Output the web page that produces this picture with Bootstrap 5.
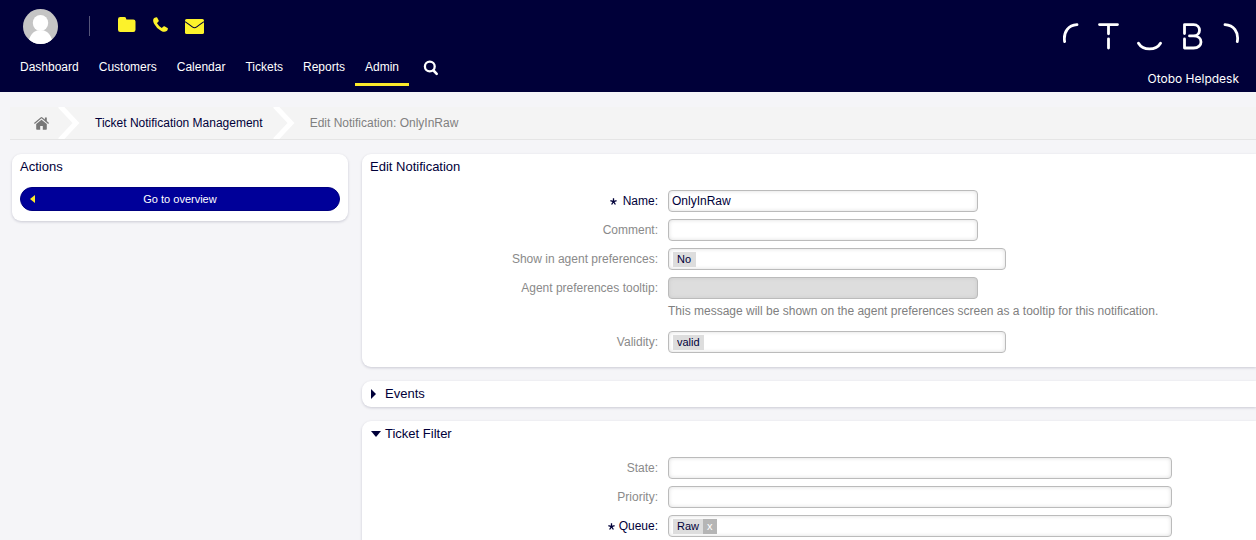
<!DOCTYPE html>
<html lang="en">
<head>
<meta charset="utf-8">
<meta name="viewport" content="width=device-width, initial-scale=1">
<title>Edit Notification: OnlyInRaw</title>
<link href="https://cdn.jsdelivr.net/npm/bootstrap@5.3.0/dist/css/bootstrap.min.css" rel="stylesheet">
<style>
  body { font: 12px/16px "Liberation Sans", Arial, sans-serif; color: #000039; background: #f5f5f8; overflow-x: hidden; }
  a { color: inherit; text-decoration: none; }
  .topbar { background: #000039; color: #fff; height: 92px; }
  .toolbar { padding: 8px 0 0 23px; height: 44px; }
  .toolbar-sep { width: 1px; height: 20px; background: #55557a; margin: 0 28px 0 31px; }
  .toolbar a { line-height: 0; }
  .toolbar-icons { gap: 17px; padding-bottom: 3px; }
  .mainnav { padding: 10px 0 0 10px; }
  .mainnav .nav-link { color: #fff; padding: 5px 10px 8px; height: 32px; border-bottom: 3px solid transparent; }
  .mainnav .nav-link.active { border-color: #fcea2b; }
  .mainnav .search-link { padding: 6px 14px 0; line-height: 0; }
  .brand { padding: 21px 17px 0 0; }
  .brand svg { margin-right: -1px; }
  .brand-name { font: 12px/16px Inter, "Noto Sans", sans-serif; padding-top: 18px; }
  .crumbs { margin: 15px 0 14px 10px; height: 33px; background: #f4f4f4; border-bottom: 1px solid #e5e5e5; color: #808080; }
  .crumbs .home { padding: 0 9px 0 24px; line-height: 0; }
  .crumb-text { padding: 0 10px 0 15px; }
  .crumb-link { color: #000039; }
  .layout { gap: 14px; padding-left: 12px; }
  .side { width: 336px; flex: none; padding-bottom: 10px; }
  .stack { gap: 14px; }
  .panel { background: #fff; border-radius: 9px; box-shadow: 0 1px 3px rgba(0, 0, 50, .18); padding: 5px 8px; }
  .panel.side { padding-bottom: 10px; }
  .panel.with-form { padding-bottom: 14px; }
  .panel-open-right { border-top-right-radius: 0; border-bottom-right-radius: 0; }
  .panel h2 { font-size: 13px; line-height: 16px; margin: 0; }
  .btn-overview { background: #000099; color: #fff; font-size: 11px; line-height: 14px; padding: 4px 9px; border: 1px solid #000080; border-radius: 12px; margin-top: 12px; }
  .btn-overview:hover { background: #0000b0; color: #fff; }
  .btn-overview span { padding-right: 5px; }
  .form-grid { display: grid; grid-template-columns: 288px minmax(0, 1fr); column-gap: 10px; row-gap: 7px; align-items: start; margin-top: 15px; }
  .form-grid label { color: #8a8a8a; text-align: right; line-height: 22px; height: 22px; }
  .form-grid label.needed { color: #000039; }
  .field { height: 22px; min-height: 0; border: 1px solid #bbb; border-radius: 4px; box-shadow: inset 0 0 4px #ddd; background: #fff; color: #000039; font-size: 12px; line-height: 16px; padding: 2px 3px; max-width: 100%; }
  .field:disabled { background: #ddd; box-shadow: inset 0 0 4px #ccc; }
  .w-field { width: 310px; }
  .w-pick { width: 338px; }
  .w-wide { width: 504px; }
  .chip-box { padding: 3px 4px 2px; }
  .chip { appearance: none; border: 0; border-radius: 0; background: #ddd; color: #000039; font-size: 11px; line-height: 15px; height: 15px; padding: 0 4px; }
  .chip-x { background: #b5b5b5; color: #fff; }
  .chip-entry { border: 0; outline: 0; background: transparent; height: 15px; min-width: 0; }
  .hint { color: #808080; margin: 4px 0 5px; }
</style>
</head>
<body>
<svg class="d-none"><symbol id="star" viewBox="0 0 7 7"><path d="M3.500 3.700V.3M3.500 3.700L.4 2.700M3.500 3.700L6.600 2.700M3.500 3.700L1.600 6.500M3.500 3.700L5.400 6.500" stroke="#000039" stroke-width="1.300"/></symbol></svg>
<header class="topbar d-flex justify-content-between">
  <div>
    <div class="toolbar d-flex align-items-center">
      <a href="#" aria-label="Profile"><svg width="35" height="35" viewBox="0 0 35 35"><defs><clipPath id="face"><circle cx="17.500" cy="17.500" r="17.500"/></clipPath></defs><g clip-path="url(#face)"><rect width="35" height="35" fill="#c5c5c5"/><ellipse cx="17.500" cy="14" rx="7.700" ry="8" fill="#fff"/><path d="M5 36c1-9 4.500-13 9-14.500h7c4.500 1.500 8 5.500 9 14.500z" fill="#fff"/></g></svg></a>
      <span class="toolbar-sep"></span>
      <div class="toolbar-icons d-flex align-items-center">
        <a href="#" aria-label="Tickets"><svg width="18" height="15" viewBox="0 0 18 15" fill="#fcf22b"><path d="M2.200 0h4.300q1.600 0 1.900 2.400h6.900q2.200 0 2.200 2.100v8.300q0 2.200-2.200 2.200H2.200Q0 15 0 12.800V2.200Q0 0 2.200 0z"/></svg></a>
        <a href="#" aria-label="Phone ticket"><svg width="15" height="15" viewBox="0 0 15 15" fill="#fcf22b"><path d="M3.400.200Q4 0 4.300.700L5.700 3.400Q6 4 5.500 4.500L4.300 5.700Q3.900 6.100 4.200 6.600 5.800 9.300 8.400 10.800 8.900 11.100 9.300 10.600L10.400 9.500Q10.900 9 11.500 9.300L14.500 10.900Q15 11.200 14.900 11.700 14.600 13.500 13.700 14.100 11.400 15.600 8.300 13.900 3.500 11.500 1.100 6.700-.600 3.500.700 1.400 1.300.400 3.400.200z"/></svg></a>
        <a href="#" aria-label="Email ticket" class="pt-1"><svg width="19" height="15" viewBox="0 0 19 15"><rect width="19" height="15" rx="1.600" fill="#fcf22b"/><path d="M0 2.700q5 3.400 7.300 5.200 2.200 1.700 4.400 0Q14 6.100 19 2.700" fill="none" stroke="#000039" stroke-width="1.100"/></svg></a>
      </div>
    </div>
    <nav class="mainnav nav flex-nowrap">
      <a class="nav-link" href="#">Dashboard</a>
      <a class="nav-link" href="#">Customers</a>
      <a class="nav-link" href="#">Calendar</a>
      <a class="nav-link" href="#">Tickets</a>
      <a class="nav-link" href="#">Reports</a>
      <a class="nav-link active" href="#" aria-current="page">Admin</a>
      <a class="search-link" href="#" aria-label="Search"><svg width="16" height="16" viewBox="0 0 16 16" fill="none" stroke="#fff"><circle cx="6.800" cy="6.500" r="4.900" stroke-width="2.300"/><path d="M10.500 10.500l3.200 3.300" stroke-width="2.600" stroke-linecap="round"/></svg></a>
    </nav>
  </div>
  <div class="brand text-end">
    <svg class="d-block ms-auto" width="180" height="32" viewBox="0 0 180 32" fill="none" stroke="#fff" stroke-width="2.800" stroke-linecap="round" stroke-linejoin="round" role="img" aria-label="OTOBO"><path d="M17 3.600C8.500 4 3.200 11 4.600 20.500M39.500 3.600H57.500M48.500 4V12.800M48.500 17.800V27M78.500 22.200C83 29.800 96 29.800 100.500 22.200M124.500 12.500V3.600H133.500C141.500 3.600 141.500 14.900 133.500 14.900H129.500M133.500 14.900C143.500 14.900 143.500 27 133.500 27H124.500V18M165 3.600C173.500 4 179 11 177.300 20.500"/></svg>
    <div class="brand-name">Otobo Helpdesk</div>
  </div>
</header>

<nav class="crumbs d-flex align-items-center" aria-label="Breadcrumb">
  <a class="home" href="#" aria-label="Home"><svg width="15" height="13" viewBox="0 0 15 13" fill="#777"><path d="M7.500 2.700L2.200 7.100V12q0 .7.700.7H6.200V9H8.800V12.700H12.100q.7 0 .7-.7V7.100z"/><path d="M7.500 0Q7 0 6.600.4L0 6 .8 6.900 7.500 1.300 14.200 6.900 15 6 12.800 4.100V.500H10.900V2.500L8.400.400Q8 0 7.500 0z"/></svg></a>
  <svg width="22" height="32" viewBox="0 0 22 32" fill="none" stroke="#fff" stroke-width="5"><path d="M2-1L18 16 2 33"/></svg>
  <a class="crumb-text crumb-link" href="#">Ticket Notification Management</a>
  <svg width="22" height="32" viewBox="0 0 22 32" fill="none" stroke="#fff" stroke-width="5"><path d="M2-1L18 16 2 33"/></svg>
  <span class="crumb-text">Edit Notification: OnlyInRaw</span>
</nav>

<div class="layout d-flex align-items-start">
  <aside class="side panel">
    <h2>Actions</h2>
    <button type="button" class="btn btn-overview w-100 d-flex align-items-center">
      <svg width="5" height="8" viewBox="0 0 5 8"><path d="M5 0v8L0 4z" fill="#fcea2b"/></svg>
      <span class="flex-grow-1">Go to overview</span>
    </button>
  </aside>

  <main class="stack flex-grow-1 d-flex flex-column">
    <section class="panel panel-open-right with-form">
      <h2>Edit Notification</h2>
      <form class="form-grid">
        <label class="needed" for="name"><svg width="7" height="7" aria-hidden="true"><use href="#star"/></svg>&ensp;Name:</label>
        <div><input id="name" class="field w-field d-block" type="text" value="OnlyInRaw"></div>
        <label for="comment">Comment:</label>
        <div><input id="comment" class="field w-field d-block" type="text"></div>
        <label for="show">Show in agent preferences:</label>
        <div class="field chip-box w-pick d-flex"><select id="show" class="chip"><option>No</option></select></div>
        <label for="tip">Agent preferences tooltip:</label>
        <div>
          <input id="tip" class="field w-field d-block" type="text" disabled>
          <div class="hint">This message will be shown on the agent preferences screen as a tooltip for this notification.</div>
        </div>
        <label for="validity">Validity:</label>
        <div class="field chip-box w-pick d-flex"><select id="validity" class="chip"><option>valid</option></select></div>
      </form>
    </section>

    <section class="panel panel-open-right">
      <h2 class="d-flex align-items-center"><svg class="me-2" width="7" height="10" viewBox="0 0 7 10"><path d="M1 0v10l5-5z" fill="#000039"/></svg>Events</h2>
    </section>

    <section class="panel panel-open-right with-form">
      <h2 class="d-flex align-items-center"><svg class="me-1" width="11" height="6" viewBox="0 0 11 6"><path d="M1 0h10L6 6z" fill="#000039"/></svg>Ticket Filter</h2>
      <form class="form-grid">
        <label for="state">State:</label>
        <div><input id="state" class="field w-wide d-block" type="text"></div>
        <label for="priority">Priority:</label>
        <div><input id="priority" class="field w-wide d-block" type="text"></div>
        <label class="needed" for="queue"><svg width="7" height="7" aria-hidden="true"><use href="#star"/></svg> Queue:</label>
        <div class="field chip-box w-wide d-flex"><span class="chip">Raw</span><button type="button" class="chip chip-x" aria-label="Remove Raw">x</button><input id="queue" class="chip-entry flex-grow-1" type="text"></div>
      </form>
    </section>
  </main>
</div>
<script src="https://cdn.jsdelivr.net/npm/bootstrap@5.3.0/dist/js/bootstrap.bundle.min.js"></script>
</body>
</html>
